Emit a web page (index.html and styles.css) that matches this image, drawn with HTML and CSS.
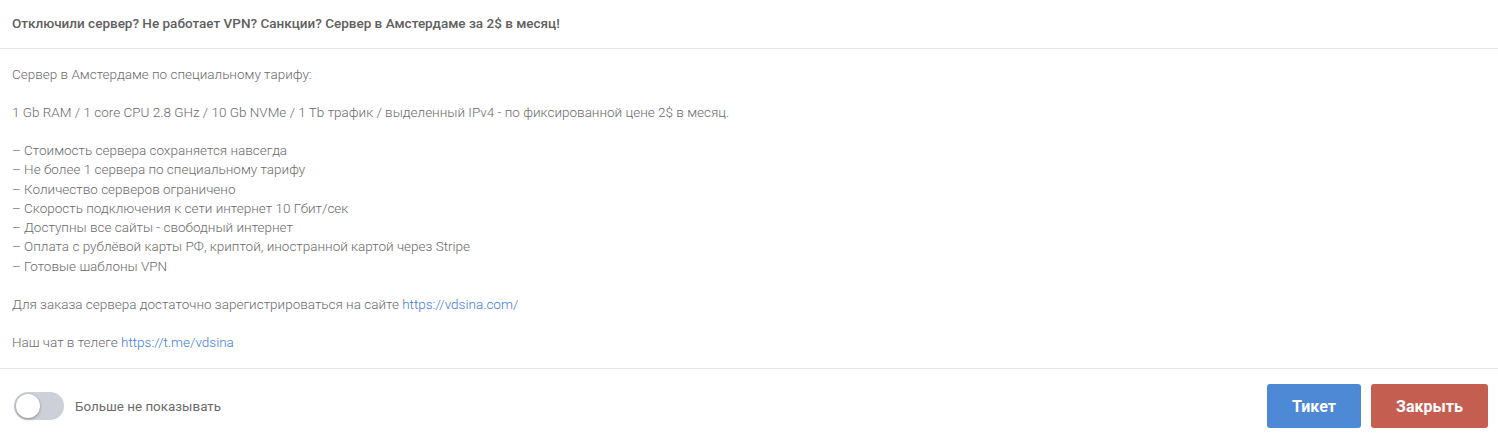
FILE: index.html
```html
<!DOCTYPE html>
<html lang="ru">
<head>
  <meta charset="UTF-8" />
  <meta name="viewport" content="width=device-width, initial-scale=1.0" />
  <title>VDSina</title>
  <link rel="stylesheet" href="styles.css">
</head>
<body>
  <div class="modal">
    <div class="modal-header">Отключили сервер? Не работает VPN? Санкции? Сервер в Амстердаме за 2$ в месяц!</div>

    <div class="modal-body">
      <p>Сервер в Амстердаме по специальному тарифу:</p>
      <p>1 Gb RAM / 1 core CPU 2.8 GHz / 10 Gb NVMe / 1 Tb трафик / выделенный IPv4 - по фиксированной цене 2$ в месяц.</p>
      <p>
        – Стоимость сервера сохраняется навсегда<br>
        – Не более 1 сервера по специальному тарифу<br>
        – Количество серверов ограничено<br>
        – Скорость подключения к сети интернет 10 Гбит/сек<br>
        – Доступны все сайты - свободный интернет<br>
        – Оплата с рублёвой карты РФ, криптой, иностранной картой через Stripe<br>
        – Готовые шаблоны VPN
      </p>
      <p>Для заказа сервера достаточно зарегистрироваться на сайте <a href="#">https://vdsina.com/</a></p>
      <p>Наш чат в телеге <a href="#">https://t.me/vdsina</a></p>
    </div>

    <div class="modal-footer">
      <label class="switch">
        <span class="switch-track"><span class="switch-knob"></span></span>
        <span class="switch-label">Больше не показывать</span>
      </label>
      <div class="actions">
        <button class="btn btn-blue">Тикет</button>
        <button class="btn btn-red">Закрыть</button>
      </div>
    </div>
  </div>
</body>
</html>
```

FILE: styles.css
```css
body {
  margin: 0;
  font-family: Roboto, "Liberation Sans", sans-serif;
  background-color: #fff;
}
.modal {
  background-color: #fff;
}
.modal-header {
  height: 48px;
  line-height: 47px;
  padding: 0 12px;
  font-size: 13.5px;
  font-weight: 500;
  color: #606060;
  border-bottom: 1px solid #e5e5e5;
}
.modal-body {
  padding: 16px 12px 16px;
  font-size: 13.5px;
  font-weight: 300;
  line-height: 19.3px;
  color: #6b6b6b;
  border-bottom: 1px solid #e5e5e5;
}
.modal-body p {
  margin: 0 0 18.7px;
}
.modal-body p:last-child {
  margin-bottom: 0;
}
.modal-body a {
  color: #3b7ddd;
  text-decoration: none;
}
.modal-footer {
  display: flex;
  justify-content: space-between;
  align-items: center;
  padding: 15px 10px 13px 14px;
}
.switch {
  display: flex;
  align-items: center;
  gap: 11px;
  cursor: pointer;
}
.switch-track {
  display: block;
  position: relative;
  width: 50px;
  height: 28px;
  border-radius: 14px;
  background-color: #cdd0d8;
}
.switch-knob {
  position: absolute;
  top: 2px;
  left: 2px;
  width: 24px;
  height: 24px;
  border-radius: 50%;
  background-color: #fff;
  box-shadow: 0 1px 3px rgba(0,0,0,0.35);
}
.switch-label {
  font-size: 13.4px;
  color: #6b6b6b;
}
.actions {
  display: flex;
  gap: 10px;
}
.btn {
  height: 44px;
  border: none;
  border-radius: 3px;
  color: #fff;
  font-family: Roboto, "Liberation Sans", sans-serif;
  font-size: 16px;
  font-weight: 700;
  cursor: pointer;
}
.btn-blue {
  width: 94px;
  background-color: #4e89d6;
}
.btn-red {
  width: 117px;
  background-color: #c45e51;
}
```
